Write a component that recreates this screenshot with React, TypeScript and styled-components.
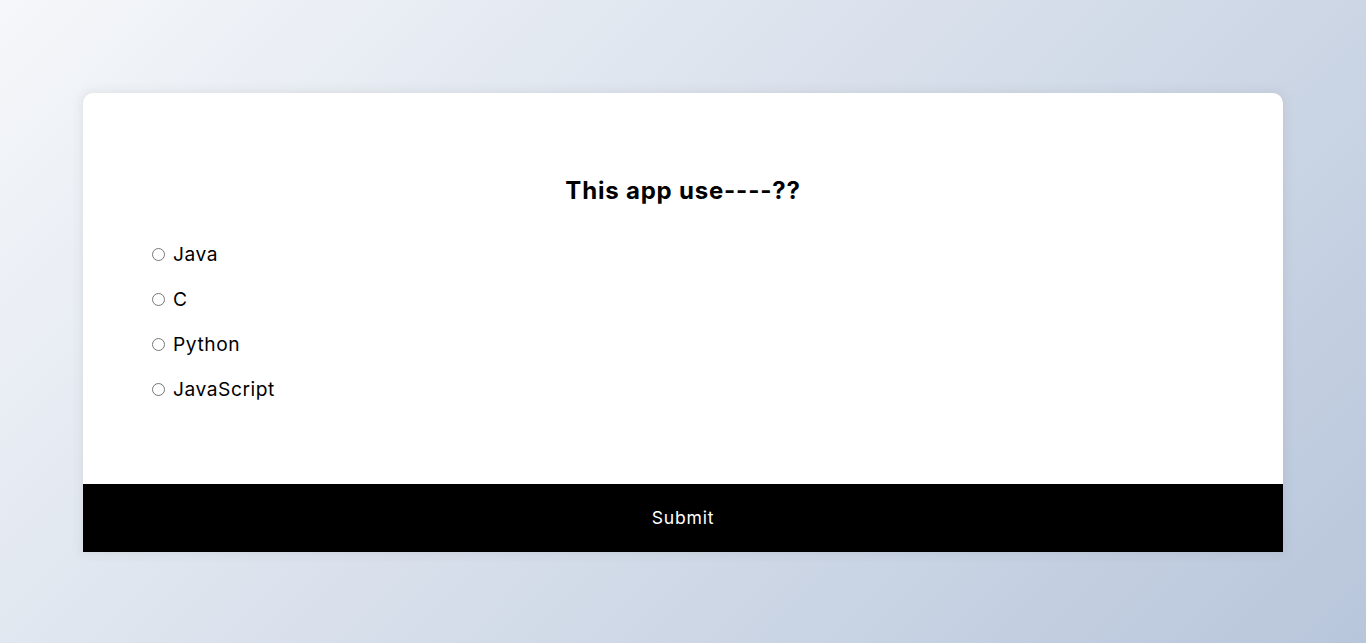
import React from "react";
import styled, { createGlobalStyle } from "styled-components";

const GlobalStyle = createGlobalStyle`
  * { box-sizing: border-box; }
  html, body { height: 100%; }
  body {
    margin: 0;
    padding-top: 2px;
    font-family: "Inter", "Open Sans", sans-serif;
    background-color: #b8c6db;
    background-image: linear-gradient(315deg, #b8c6db 0%, #f5f7fa 100%);
    display: flex;
    align-items: center;
    justify-content: center;
    height: 100vh;
    overflow: hidden;
  }
  #root { width: 100%; display: flex; justify-content: center; }
`;

const Card = styled.div`
  width: 1200px;
  background: #fff;
  border-radius: 10px 10px 0 0;
  box-shadow: 0 0 10px 2px rgba(100, 100, 100, 0.1);
`;

const Header = styled.div`
  padding: 64px;
`;

const Title = styled.h2`
  margin: 0;
  padding: 16px;
  text-align: center;
  font-size: 24px;
  line-height: 35px;
  font-weight: 700;
  letter-spacing: 0.8px;
  color: #000;
`;

const List = styled.ul`
  list-style: none;
  padding: 0;
  margin: 16px 0 16px;
`;

const Item = styled.li`
  display: flex;
  align-items: center;
  margin: 16px 0;
  font-size: 19.2px;
  line-height: 29px;
  letter-spacing: 0.55px;
  color: #000;
  &:first-child { margin-top: 0; }
  &:last-child { margin-bottom: 0; }
`;

const Radio = styled.input`
  width: 13px;
  height: 13px;
  margin: 0 8px 0 5px;
`;

const Label = styled.label`
  cursor: pointer;
`;

const SubmitButton = styled.button`
  display: block;
  width: 100%;
  background: #000;
  color: #fff;
  border: none;
  font-family: inherit;
  font-size: 17.6px;
  line-height: 26px;
  letter-spacing: 0.8px;
  padding: 21px;
  cursor: pointer;
`;

const options = ["Java", "C", "Python", "JavaScript"];

export default function App() {
  return (
    <>
      <GlobalStyle />
      <Card>
        <Header>
          <Title>This app use----??</Title>
          <List>
            {options.map((o, i) => (
              <Item key={o}>
                <Radio type="radio" name="answer" id={`opt${i}`} />
                <Label htmlFor={`opt${i}`}>{o}</Label>
              </Item>
            ))}
          </List>
        </Header>
        <SubmitButton>Submit</SubmitButton>
      </Card>
    </>
  );
}
